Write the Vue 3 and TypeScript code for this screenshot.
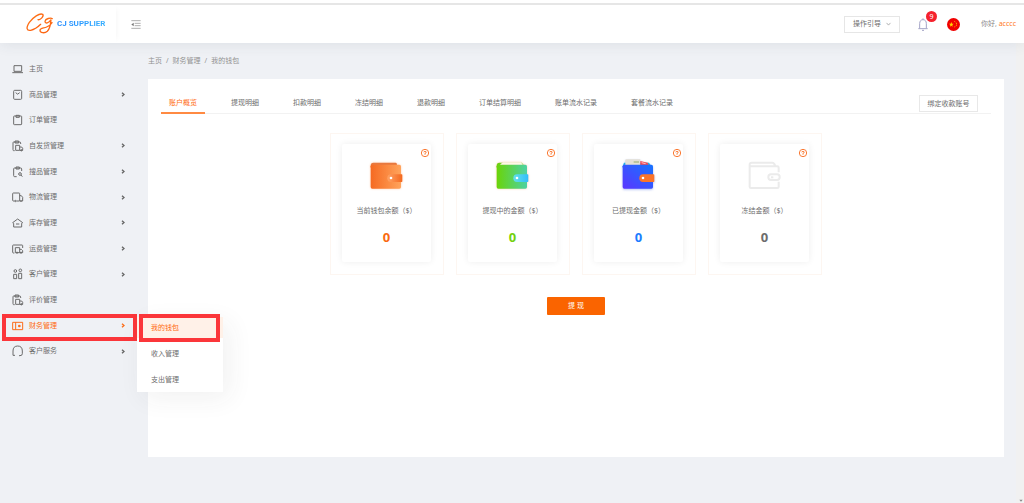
<script setup lang="ts">
import { ref } from 'vue'

interface MenuItem { label: string; icon: string; arrow: boolean }
interface Card { label: string; kind: string }

const menu: MenuItem[] = [
  { label: '主页', icon: 'laptop', arrow: false },
  { label: '商品管理', icon: 'bag', arrow: true },
  { label: '订单管理', icon: 'clip', arrow: false },
  { label: '自发货管理', icon: 'cliptruck', arrow: true },
  { label: '搜品管理', icon: 'clipsearch', arrow: true },
  { label: '物流管理', icon: 'truck', arrow: true },
  { label: '库存管理', icon: 'house', arrow: true },
  { label: '运费管理', icon: 'freight', arrow: true },
  { label: '客户管理', icon: 'people', arrow: true },
  { label: '评价管理', icon: 'cliptruck', arrow: false },
  { label: '财务管理', icon: 'finance', arrow: true },
  { label: '客户服务', icon: 'headset', arrow: true },
]
const activeMenu = '财务管理'
const submenu = ['我的钱包', '收入管理', '支出管理']
const crumbs = ['主页', '财务管理', '我的钱包']
const tabs = ['账户概览', '提现明细', '扣款明细', '冻结明细', '退款明细', '订单结算明细', '账单流水记录', '套餐流水记录']
const activeTab = ref('账户概览')
const cards: Card[] = [
  { label: '当前钱包余额（$）', kind: 'orange' },
  { label: '提现中的金额（$）', kind: 'green' },
  { label: '已提现金额（$）', kind: 'blue' },
  { label: '冻结金额（$）', kind: 'grey' },
]
</script>

<template>
  <div class="page">
    <header class="top">
      <a class="brand" href="#">
        <svg class="mark" viewBox="0 0 84 66" aria-hidden="true">
          <defs>
            <linearGradient id="mk" x1="0" y1="0" x2="1" y2="1">
              <stop offset="0" stop-color="#ff7a1a" /><stop offset="1" stop-color="#fb5c10" />
            </linearGradient>
          </defs>
          <path d="M36 20C43 22 55 9 50 4C41 -1 21 13 10 28C-1 45 2 54 14 52C24 50 36 42 44 34" />
          <path d="M79 17C74 13 58 17 57 25C57 33 69 31 75 20C74 33 72 47 64 55C56 62 42 60 42 52C42 43 54 46 62 42C70 39 75 34 78 29" />
        </svg>
        <span class="name">CJ SUPPLIER</span>
      </a>
      <button class="fold" type="button" aria-label="收起菜单">
        <svg viewBox="0 0 30 27"><path d="M1 2H29M11 10H29M11 17H29M1 25H29" /><path class="fill" d="M1 13.500L8 8V19Z" /></svg>
      </button>
      <div class="tools">
        <button class="guide" type="button">
          操作引导
          <svg viewBox="0 0 18 12"><path d="M2 2L9 10L16 2" /></svg>
        </button>
        <button class="bell" type="button" aria-label="通知">
          <svg viewBox="0 0 30 39"><path d="M5 31V17C5 9 9 5 15 5S25 9 25 17V31M1 32H29M15 1V5M12 37H18" /></svg>
          <span class="badge">9</span>
        </button>
        <button class="flag" type="button" aria-label="中文">
          <svg viewBox="0 0 39 39"><circle cx="19.500" cy="19.500" r="19.500" fill="#f00000" /><path d="M13 12l2 5h5l-4 4 1 5-4-3-4 3 1-5-4-4h5z" fill="#ffd600" /><path d="M22 10l3 2M27 15l3 2M27 22l3-1M22 27l3-2" stroke="#ffb000" stroke-width="3" /></svg>
        </button>
        <span class="hello">你好, <a href="#">acccc</a></span>
      </div>
    </header>

    <div class="body">
      <nav class="side">
        <div v-for="m in menu" :key="m.label" class="entry" :class="{ on: m.label === activeMenu }">
          <a href="#" class="link">
            <svg class="ico" viewBox="0 0 36 36" aria-hidden="true">
              <template v-if="m.icon === 'laptop'"><path d="M6 8H29V25H6ZM1 29H33" /></template>
              <template v-else-if="m.icon === 'bag'"><rect x="5" y="4" width="24" height="27" rx="3" /><path d="M11 11Q17 20 23 11" /></template>
              <template v-else-if="m.icon === 'clip'"><rect x="5" y="6" width="24" height="26" rx="2" /><path d="M12 4H22V10H12Z" /></template>
              <template v-else-if="m.icon === 'cliptruck'">
                <path d="M8 32H5Q3 32 3 29V8Q3 6 5 6H23Q26 6 26 9V12M9 3H20V9H9Z" /><path d="M11 16H23V31H11ZM23 21H29L32 25V31H23" /><circle cx="28" cy="31" r="2" />
              </template>
              <template v-else-if="m.icon === 'clipsearch'">
                <path d="M14 32H8Q5 32 5 29V8Q5 6 8 6H26Q29 6 29 9V15M12 3H22V9H12Z" /><circle cx="24" cy="24" r="4" /><path d="M27 27L31 32" />
              </template>
              <template v-else-if="m.icon === 'truck'"><path d="M7 30H4Q2 30 2 27V8Q2 6 4 6H21Q23 6 23 8V30H13M23 14H28L32 19V30H30" /><circle cx="10" cy="30" r="2" /><circle cx="27" cy="30" r="2" /></template>
              <template v-else-if="m.icon === 'house'"><path d="M2 17L17 6L32 17L29 19V30H5V19ZM12 21H22" /></template>
              <template v-else-if="m.icon === 'freight'"><path d="M7 30H4Q2 30 2 27V8Q2 6 4 6H30Q32 6 32 8V15" /><path d="M10 14H23V29H10ZM23 19H28L32 23V29H23" /><circle cx="15" cy="29" r="2" /><circle cx="27" cy="29" r="2" /></template>
              <template v-else-if="m.icon === 'people'"><circle cx="10" cy="9" r="4" /><circle cx="25" cy="7" r="4" /><path d="M5 19H14V32H5ZM20 16H29V32H20Z" /></template>
              <template v-else-if="m.icon === 'finance'"><path d="M2 7H32V29H2ZM11 7V29" /><circle class="dot" cx="22" cy="18" r="4" /></template>
              <template v-else><path d="M9 31H3V18C3 8 8 3 17 3S31 8 31 18V26Q31 32 24 32H21" /></template>
            </svg>
            <span class="txt">{{ m.label }}</span>
            <svg v-if="m.arrow" class="arr" viewBox="0 0 12 15"><path d="M3 2L9 7.500L3 13" /></svg>
          </a>
          <template v-if="m.label === activeMenu">
            <span class="frame outer-frame"></span>
            <div class="pop">
              <a v-for="(s, i) in submenu" :key="s" href="#" :class="{ sel: i === 0 }">{{ s }}<span v-if="i === 0" class="frame"></span></a>
            </div>
          </template>
        </div>
      </nav>

      <main class="main">
        <nav class="crumbs">
          <template v-for="(c, i) in crumbs" :key="c"><i v-if="i > 0">/</i><a href="#">{{ c }}</a></template>
        </nav>
        <section class="panel">
          <div class="tabbar">
            <button v-for="t in tabs" :key="t" type="button" class="tab" :class="{ cur: t === activeTab }" @click="activeTab = t">{{ t }}</button>
            <button type="button" class="bind">绑定收款账号</button>
          </div>
          <div class="cards">
            <div v-for="c in cards" :key="c.kind" class="card">
              <div class="inner" :class="c.kind">
                <button class="help" type="button" aria-label="说明">
                  <svg viewBox="0 0 24 24"><circle cx="12" cy="12" r="11" /><path d="M8.500 10Q8.500 7 12 7T15.500 10Q15.500 12 12 13V15M12 16V18" /></svg>
                </button>
                <svg class="wallet" viewBox="0 0 108 90" aria-hidden="true">
                  <defs>
                    <linearGradient id="g-orange"><stop offset="0" stop-color="#f56a22" /><stop offset="1" stop-color="#ffa45c" /></linearGradient>
                    <linearGradient id="t-orange"><stop offset="0" stop-color="#ffa264" /><stop offset="1" stop-color="#f4681e" /></linearGradient>
                    <linearGradient id="g-green"><stop offset="0" stop-color="#6ad408" /><stop offset="1" stop-color="#4dd2a4" /></linearGradient>
                    <linearGradient id="t-green"><stop offset="0" stop-color="#62e0e8" /><stop offset="1" stop-color="#32bdfb" /></linearGradient>
                    <linearGradient id="g-blue" x1="0" y1="1" x2="1" y2="0"><stop offset="0" stop-color="#5a35ff" /><stop offset="1" stop-color="#1674ff" /></linearGradient>
                  </defs>
                  <template v-if="c.kind === 'grey'">
                    <path class="line" d="M95 34V20Q95 16 91 16H8M8 16V78Q8 81 12 81H91Q95 81 95 78V62M8 20V10Q8 5 14 5H76Q80 5 82 9L85 15" />
                    <rect class="line" x="64" y="40" width="34" height="17" rx="8" /><path class="line" d="M72 49H79" />
                  </template>
                  <template v-else>
                    <path v-if="c.kind === 'orange'" d="M5 14Q5 5 13 5H80Q84 5 84 12V20H5Z" fill="#e8783e" />
                    <template v-else-if="c.kind === 'green'"><path d="M5 14Q5 5 13 5H80L88 14V20H5Z" fill="#70cf18" /><path d="M16 10L24 4H78L84 12H16Z" fill="#fff6e6" /></template>
                    <template v-else>
                      <path d="M5 16L9 5H84L90 14V20H5Z" fill="#1fb0e8" /><path d="M13-3Q13-5 16-5H58V14H13Z" fill="#e4e0d4" /><path d="M38 1H54V5H38Z" fill="#a8b884" />
                      <path d="M58 0L80 5L84 14H58Z" fill="#f34b55" /><path d="M62 5L74 8" stroke="#fff" stroke-width="2" />
                    </template>
                    <rect x="5" y="11" width="91" height="72" rx="5" :fill="`url(#g-${c.kind})`" />
                    <path d="M66 40H98Q100 40 100 43V60Q100 63 98 63H66Q55 62 55 51.500T66 40Z" :fill="c.kind === 'blue' ? '#fb7429' : `url(#t-${c.kind})`" />
                    <circle cx="66" cy="51" r="4" fill="#fff" />
                  </template>
                </svg>
                <span class="cap">{{ c.label }}</span>
                <strong>0</strong>
              </div>
            </div>
          </div>
          <button class="withdraw" type="button">提 现</button>
        </section>
      </main>
      <div class="track"><svg viewBox="0 0 12 9"><path d="M1 2H11L6 8Z" /></svg></div>
    </div>
  </div>
</template>

<style>
body { margin: 0; background: #eff1f5; }
</style>

<style scoped>
.page { min-height: 100vh; display: flex; flex-direction: column; font: 7px/12px "Noto Sans", "Noto Sans CJK SC", sans-serif; color: #6c6c6c; background: #eff1f5; }
* { box-sizing: border-box; }
a { color: inherit; text-decoration: none; }
button { font: inherit; color: inherit; background: none; border: 0; padding: 0; margin: 0; cursor: pointer; }
svg { display: block; fill: none; overflow: visible; }

.top { height: 43px; padding-top: 5px; display: flex; align-items: center; background: linear-gradient(#fff 3px, #e6e6e6 3px, #e6e6e6 5px, #fff 5px); box-shadow: 0 2px 14px rgba(60, 65, 80, .09); position: relative; z-index: 1; }
.brand { flex: none; width: 116px; height: 38px; padding-left: 26px; display: flex; align-items: center; gap: 3px; box-shadow: 4px 0 6px -4px rgba(0, 0, 0, .05); }
.mark { width: 28px; height: 22px; stroke: url(#mk); stroke-width: 4; stroke-linecap: round; }
.name { font: 700 8px/12px Roboto, sans-serif; background: linear-gradient(90deg, #1e88ff, #38b0ff); background-clip: text; color: transparent; white-space: nowrap; }
.fold { margin-left: 15px; }
.fold svg { width: 10px; height: 9px; stroke: #888; stroke-width: 2; }
.fold .fill { fill: #777; stroke: none; }
.tools { margin-left: auto; padding-right: 8px; display: flex; align-items: center; }
.guide { width: 56px; height: 17px; border: 1px solid #e6e6e6; display: flex; align-items: center; justify-content: center; gap: 5px; }
.guide svg { width: 5px; height: 4px; stroke: #777; stroke-width: 2; }
.bell { position: relative; margin-left: 18px; }
.bell svg { width: 10px; height: 13px; stroke: #a3a3c6; stroke-width: 3; }
.badge { position: absolute; left: 8px; top: -7px; width: 11px; height: 11px; border-radius: 50%; background: #f5222d; color: #fff; line-height: 11px; text-align: center; }
.flag { margin-left: 19px; }
.flag svg { width: 13px; height: 13px; }
.hello { margin-left: 21px; color: #888; white-space: nowrap; }
.hello a { color: #ff7a26; }

.body { flex: 1; display: flex; }
.side { flex: none; width: 137px; height: 308px; margin-top: 13px; display: flex; flex-direction: column; }
.entry { flex: 1; display: flex; position: relative; }
.link { flex: 1; display: flex; align-items: center; padding: 0 12px 0 12px; }
.ico { width: 12px; height: 12px; stroke: #6b6b6b; stroke-width: 3; }
.txt { flex: 1; margin-left: 5px; }
.arr { width: 4px; height: 5px; stroke: #666; stroke-width: 4; }
.on { color: #ff6a10; z-index: 3; }
.on .ico, .on .arr { stroke: #fb6d1a; }
.dot { fill: #fb6d1a; stroke: none; }
.frame { position: absolute; inset: -3px 3px -4px 2px; border: 4px solid #fb363a; pointer-events: none; }
.outer-frame { inset: 1px 0 -3px 2px; }
.pop { position: absolute; left: 137px; top: 4px; width: 86px; padding-bottom: 2px; display: flex; flex-direction: column; gap: 5px; background: #fff; color: #6c6c6c; box-shadow: 6px 6px 24px rgba(50, 50, 60, .07); }
.pop a { position: relative; height: 21px; line-height: 21px; padding-left: 14px; }
.pop .sel { background: #fff1e8; color: #ff6a10; }

.main { flex: 1; min-width: 0; padding: 12px 12px 46px 11px; display: flex; flex-direction: column; }
.crumbs { height: 12px; display: flex; color: #929292; }
.crumbs i { font-style: normal; margin: 0 4px; }
.panel { flex: 1; margin-top: 12px; padding: 13px 13px 0; background: #fff; display: flex; flex-direction: column; align-items: center; }
.tabbar { align-self: stretch; height: 22px; display: flex; gap: 18px; border-bottom: 1px solid #f2f2f2; }
.tab { height: 22px; padding: 2px 8px 0; border-bottom: 2px solid transparent; white-space: nowrap; }
.cur { color: #ff6a10; border-bottom-color: #ff8a42; }
.bind { margin: 3px 13px 0 auto; width: 59px; height: 17px; border: 1px solid #e8e8e8; white-space: nowrap; }
.cards { margin-top: 19px; display: flex; gap: 12px; }
.card { width: 114px; padding: 10px 12px 12px 11px; border: 1px solid #fdf6f1; }
.inner { position: relative; height: 118px; display: flex; flex-direction: column; align-items: center; background: #fff; border-radius: 2px; box-shadow: 0 0 7px rgba(0, 0, 0, .07); }
.help { position: absolute; right: 2px; top: 5px; }
.help svg { width: 8px; height: 8px; stroke: #fa7a34; stroke-width: 3; }
.wallet { width: 36px; height: 30px; margin-top: 17px; filter: drop-shadow(0 0 1px rgba(255, 120, 40, .35)); }
.blue .wallet { filter: drop-shadow(0 1px 1px rgba(40, 80, 220, .35)); }
.grey .wallet { filter: none; }
.line { stroke: #ebebeb; stroke-width: 6; }
.cap { margin-top: 14px; white-space: nowrap; }
strong { margin-top: 12px; font-size: 13px; line-height: 16px; }
.orange strong { color: #fa6a10; }
.green strong { color: #73d10d; }
.blue strong { color: #1b7dff; }
.withdraw { margin-top: 22px; width: 58px; height: 18px; background: #fa6400; color: #fff; border-radius: 1px; }
.track { flex: none; width: 8px; background: #f1f1f1; display: flex; align-items: flex-end; justify-content: flex-end; }
.track svg { width: 4px; height: 3px; margin: 0 1px 1px 0; fill: #888; }
</style>
